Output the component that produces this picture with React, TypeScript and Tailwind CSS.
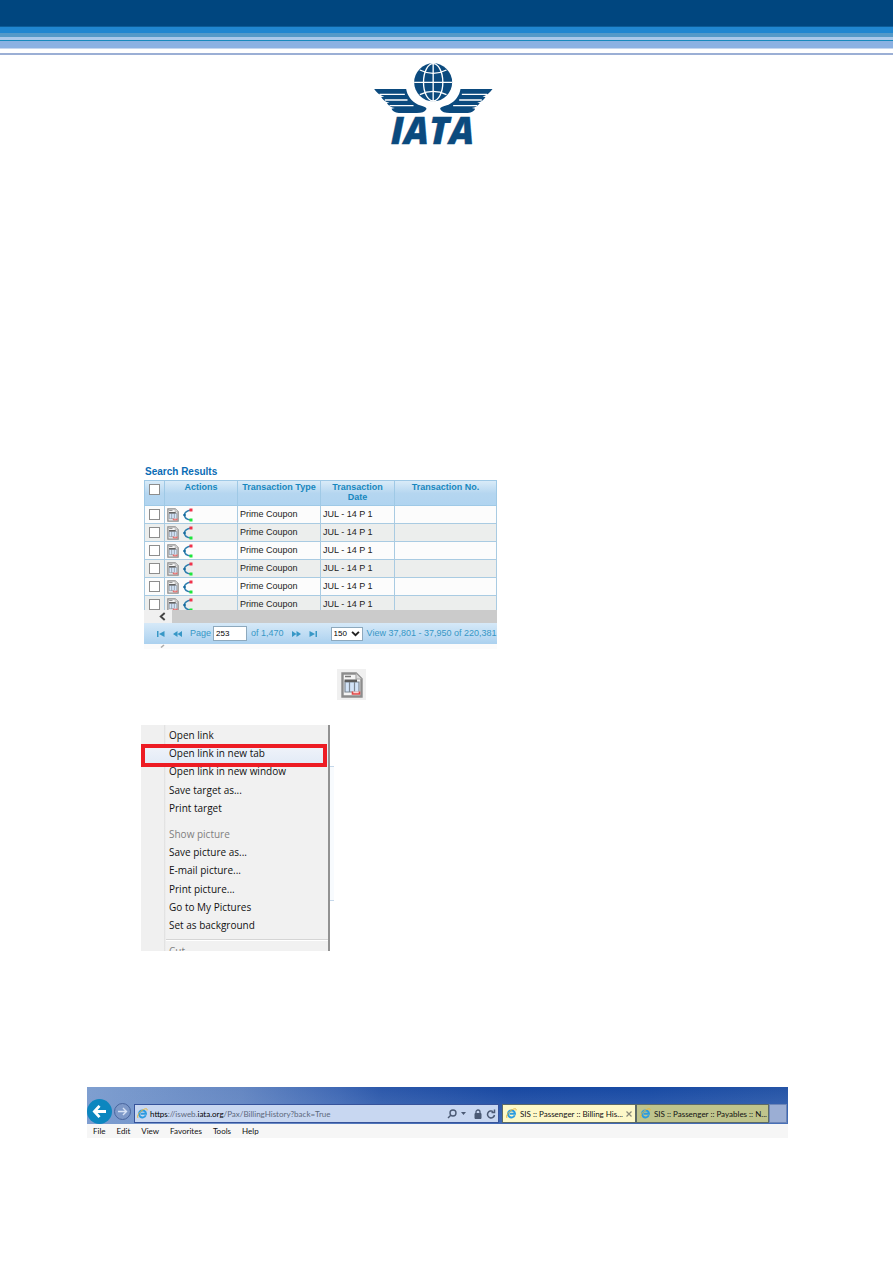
import { useState } from "react";

function IataLogo() {
  return (
    <svg viewBox="30 18 356 252" className="h-[84px] w-[119px] overflow-visible" role="img" aria-label="IATA">
      <g fill="#0b4a7e">
        <path d="M30 99H126C129 118 141 136 162 146C176 151 188 153 187 159C182 168 172 171 158 171H104C92 170 84 164 82 158L92 156C82 156 74 150 68 142L76 140C64 139 56 131 51 123L60 122C46 117 36 109 30 99Z" />
        <path d="M385 99H289C286 118 274 136 253 146C239 151 227 153 228 159C233 168 243 171 257 171H311C323 170 331 164 333 158L323 156C333 156 341 150 347 142L339 140C351 139 359 131 364 123L355 122C369 117 379 109 385 99Z" />
        <circle cx="207" cy="79" r="57" />
      </g>
      <g fill="none" stroke="#fff" strokeWidth="4">
        <path d="M46 115H122M62 132H130M76 149H148M369 115H293M353 132H285M339 149H267" />
        <path d="M207 22V136M150 79H264" />
        <ellipse cx="207" cy="79" rx="29" ry="56" />
        <path d="M167 42Q207 62 247 42M167 116Q207 96 247 116" />
      </g>
      <text
        x="80"
        y="265"
        fontSize="111"
        fill="#0b4a7e"
        stroke="#0b4a7e"
        strokeWidth="1"
        className="font-['Open_Sans',sans-serif] font-extrabold italic"
      >
        IATA
      </text>
    </svg>
  );
}

function InvoiceIcon({ className }: { className: string }) {
  return (
    <svg viewBox="0 0 22 26" className={className} aria-hidden="true">
      <path d="M1.500 1.500H15L20.500 7V24.500H1.500Z" fill="#f4f4f4" stroke="#8c8c8c" strokeWidth="2.400" />
      <path d="M15 1.500V7H20.500" fill="#ddd" stroke="#aaa" strokeWidth="1.200" />
      <path d="M4 4.500H10" stroke="#777" strokeWidth="1.500" />
      <path d="M4 10H18V20H4Z" fill="#d3e4f8" stroke="#7d8792" strokeWidth="1.200" />
      <path d="M8.500 10V20M13.500 10V20" stroke="#7d8792" strokeWidth="1.200" />
      <path d="M3.500 7.500H16V10H3.500Z" fill="#5c5c5c" />
      <path d="M11.500 19.500V22H18.500V19.500" fill="#fbd5d5" stroke="#e04848" strokeWidth="1.600" />
    </svg>
  );
}

function FlowIcon() {
  return (
    <svg viewBox="0 0 10 14" className="h-[14px] w-[10px]" aria-hidden="true">
      <path d="M7.5 2C3 3 1.5 5 1.5 7C1.5 9.500 3.500 11.500 7.500 12" fill="none" stroke="#2f7fae" strokeWidth="1.5" />
      <circle cx="1.500" cy="7" r="1.300" fill="#146a9e" />
      <rect x="6.500" y="0.500" width="3" height="3" fill="#f0324a" />
      <rect x="6.500" y="10.500" width="3" height="3" fill="#1ee63c" />
    </svg>
  );
}

function IeIcon() {
  return (
    <svg viewBox="0 0 22 22" className="size-[11px] shrink-0" aria-hidden="true">
      <path d="M17.500 14.500A7 7 0 1 1 18 11.500H7" fill="none" stroke="#2c9be0" strokeWidth="4" />
      <path d="M2 20C-1 16 5 7 13 3C18 0.500 21.500 1 20 5" fill="none" stroke="#e8b83c" strokeWidth="2" />
    </svg>
  );
}

const checkbox = "block size-[11px] appearance-none border border-[#8d8d8d] bg-white checked:bg-[#1b87c0]";

function SearchResults() {
  const head = "border border-[#9fc9e6] px-1 pt-px align-top leading-[10px] font-bold text-[#1787be]";
  const cell = "h-[18px] border border-[#a9cbe2] px-[2px] py-0";
  return (
    <section className="ml-[144px] w-[353px] font-['Liberation_Sans',Arial,sans-serif] text-[9px]">
      <h2 className="h-[14px] pl-px text-[10px] leading-[12px] font-bold text-[#0a6cb5]">Search Results</h2>
      <div className="h-[130px] overflow-hidden">
        <table className="w-full table-fixed border-collapse">
          <colgroup>
            <col className="w-[20px]" />
            <col className="w-[73px]" />
            <col className="w-[83px]" />
            <col className="w-[74px]" />
            <col />
          </colgroup>
          <thead>
            <tr className="h-[25px] bg-linear-to-b from-[#d9ebf8] via-[#b5d6f0] to-[#b0d4f0]">
              <th className="border border-[#9fc9e6] p-0 pt-[3px] pl-1 align-top">
                <input type="checkbox" aria-label="Select all rows" className={checkbox} />
              </th>
              <th className={head}>Actions</th>
              <th className={head}>Transaction Type</th>
              <th className={head}>Transaction Date</th>
              <th className={head}>Transaction No.</th>
            </tr>
          </thead>
          <tbody>
            {[1, 2, 3, 4, 5, 6].map((row) => (
              <tr key={row} className="bg-[#fcfcfc] text-[#222] even:bg-[#eceeed]">
                <td className="border border-[#a9cbe2] p-0 pl-1">
                  <input type="checkbox" aria-label={`Select row ${row}`} className={checkbox} />
                </td>
                <td className={cell}>
                  <div className="flex items-center gap-1">
                    <InvoiceIcon className="h-[14px] w-3" />
                    <FlowIcon />
                  </div>
                </td>
                <td className={cell}>Prime Coupon</td>
                <td className={`${cell} whitespace-nowrap`}>JUL - 14 P 1</td>
                <td className={cell}></td>
              </tr>
            ))}
          </tbody>
        </table>
      </div>
      <div className="flex h-[13px] bg-[#cbcbcb]">
        <button aria-label="Scroll left" className="flex w-[28px] items-center justify-center bg-[#f0f0f0] pl-2">
          <svg viewBox="0 0 8 10" className="h-[9px] w-[7px]">
            <path d="M6.500 1L2 5L6.500 9" fill="none" stroke="#444" strokeWidth="2.200" />
          </svg>
        </button>
      </div>
      <nav className="flex h-[21px] items-center bg-linear-to-b from-[#d6e9f8] to-[#abd1ef] pl-[13px] whitespace-nowrap text-[#3797c6]">
        <button aria-label="First page" className="mr-2">
          <svg viewBox="0 0 8 6" className="h-[6px] w-2" fill="currentColor">
            <path d="M0 0H1.500V6H0ZM7.500 0V6L2 3Z" />
          </svg>
        </button>
        <button aria-label="Previous page" className="mr-2">
          <svg viewBox="0 0 9 6" className="h-[6px] w-[9px]" fill="currentColor">
            <path d="M4.500 0V6L0 3ZM9 0V6L4.500 3Z" />
          </svg>
        </button>
        <label htmlFor="page" className="mr-[2px]">Page</label>
        <input id="page" defaultValue="253" className="mr-1 h-[15px] w-[34px] border border-[#8ea9bd] bg-white px-[2px] text-[8px] text-black" />
        <span className="mr-2">of 1,470</span>
        <button aria-label="Next page" className="mr-2">
          <svg viewBox="0 0 9 6" className="h-[6px] w-[9px]" fill="currentColor">
            <path d="M0 0V6L4.500 3ZM4.500 0V6L9 3Z" />
          </svg>
        </button>
        <button aria-label="Last page" className="mr-[14px]">
          <svg viewBox="0 0 8 6" className="h-[6px] w-2" fill="currentColor">
            <path d="M0.500 0V6L6 3ZM6.500 0H8V6H6.500Z" />
          </svg>
        </button>
        <span className="relative mr-1">
          <select aria-label="Rows per page" className="block h-[14px] w-[32px] appearance-none border border-[#8ea9bd] bg-white pl-[2px] text-[8px] text-black">
            <option>150</option>
          </select>
          <svg viewBox="0 0 10 7" className="pointer-events-none absolute top-1 right-[3px] h-[6px] w-[9px]" aria-hidden="true">
            <path d="M1 1L5 5L9 1" fill="none" stroke="#222" strokeWidth="2.200" />
          </svg>
        </span>
        <span>View 37,801 - 37,950 of 220,381</span>
      </nav>
      <div className="h-[5px] bg-[#fbfbfb] pl-[16px]">
        <svg viewBox="0 0 6 4" className="h-[4px] w-[6px]" aria-hidden="true">
          <path d="M1 3.500L4 1" stroke="#aaa" strokeWidth="1.500" />
        </svg>
      </div>
    </section>
  );
}

function ContextMenu() {
  const item = "flex items-center pl-[28px] text-left";
  return (
    <div className="ml-[141px] flex h-[226px] w-[193px] font-['Open_Sans','Noto_Sans',sans-serif] text-[10px] text-[#111]">
      <div role="menu" className="relative w-[187px] overflow-hidden bg-linear-to-r from-[#f0f0f0] from-[23px] via-[#dedede] via-[23px] to-[#f1f1f1] to-[25px] pt-px">
        <div className="grid h-[92px] grid-rows-5">
          <button role="menuitem" className={item}>Open link</button>
          <button role="menuitem" className={`${item} bg-linear-to-b from-[#f1f4fa] to-[#e3ebf7]`}>Open link in new tab</button>
          <button role="menuitem" className={item}>Open link in new window</button>
          <button role="menuitem" className={item}>Save target as...</button>
          <button role="menuitem" className={item}>Print target</button>
        </div>
        <div className="mt-[7px] grid h-[110px] grid-rows-6">
          <button role="menuitem" disabled className={`${item} text-[#808080]`}>Show picture</button>
          <button role="menuitem" className={item}>Save picture as...</button>
          <button role="menuitem" className={item}>E-mail picture...</button>
          <button role="menuitem" className={item}>Print picture...</button>
          <button role="menuitem" className={item}>Go to My Pictures</button>
          <button role="menuitem" className={item}>Set as background</button>
        </div>
        <div className="mt-1 ml-[25px] h-[2px] border-t border-[#d5d5d5] bg-white" />
        <button role="menuitem" disabled className={`${item} h-[20px] text-[#808080]`}>Cut</button>
        <div className="pointer-events-none absolute top-[19px] right-px left-0 h-[23px] border-4 border-[#ed1c24]" />
      </div>
      <div className="w-[2px] bg-[#929292]" />
      <div className="mt-[41px] h-[135px] flex-1 border-y border-[#c4d7ea] bg-[#f8fbfe]" />
    </div>
  );
}

function AddressBar() {
  const [editing, setEditing] = useState(false);
  const [url, setUrl] = useState("https://isweb.iata.org/Pax/BillingHistory?back=True");
  return (
    <div className="flex h-[19px] flex-1 items-center gap-[2px] border border-[#36539b] bg-[#c8d7f1] px-[2px]">
      <IeIcon />
      <div className="relative flex h-full flex-1 items-center text-[#5c687c]">
        <input
          aria-label="Address"
          className="absolute inset-0 bg-transparent outline-none"
          value={editing ? url : ""}
          onChange={(e) => setUrl(e.target.value)}
          onFocus={() => setEditing(true)}
          onBlur={() => setEditing(false)}
        />
        {!editing && (
          <span className="pointer-events-none whitespace-nowrap">
            <span className="text-black">https</span>://isweb.<span className="text-black">iata.org</span>/Pax/BillingHistory?back=True
          </span>
        )}
      </div>
      <div className="flex items-center gap-1 text-[#4b5a75]">
        <button aria-label="Search">
          <svg viewBox="0 0 10 10" className="size-[10px]" fill="none" stroke="currentColor" strokeWidth="1.400">
            <circle cx="6" cy="4" r="3" />
            <path d="M4 6L1 9" />
          </svg>
        </button>
        <button aria-label="Search options" className="mr-1">
          <svg viewBox="0 0 5 3" className="h-[3px] w-[5px]" fill="currentColor"><path d="M0 0H5L2.500 3Z" /></svg>
        </button>
        <svg viewBox="0 0 8 10" className="h-[10px] w-2" aria-hidden="true">
          <path d="M1 4.500H7V9.500H1Z" fill="currentColor" stroke="currentColor" />
          <path d="M2 5V3A2 2 0 0 1 6 3V5" fill="none" stroke="currentColor" strokeWidth="1.300" />
        </svg>
        <button aria-label="Refresh">
          <svg viewBox="0 0 10 10" className="size-[10px]" fill="none" stroke="currentColor" strokeWidth="1.500">
            <path d="M8.500 6A3.500 3.500 0 1 1 7 2.500M5.500 3.500H8.500V0.500" />
          </svg>
        </button>
      </div>
    </div>
  );
}

function BrowserBar() {
  const tab = "flex h-[19px] items-center gap-[3px] overflow-hidden border border-[#5c6a66] pl-[3px] whitespace-nowrap text-[#111]";
  return (
    <section className="mr-[105px] ml-[87px] font-['Lato','Noto_Sans',sans-serif] text-[8px]">
      <div className="h-[37px] bg-[linear-gradient(90deg,#7f9fd0_0%,#6587c2_22%,#3f68b4_36%,#2c58aa_42%,#1848a2_60%,#184aa4_80%,#2554a6_100%)]">
        <div className="flex h-full items-end bg-linear-to-b from-transparent to-[#7c9bd0]/40">
          <button aria-label="Back" className="flex size-[25px] shrink-0 items-center justify-center rounded-full bg-[#0c86bf]">
            <svg viewBox="0 0 16 14" className="h-[13px] w-[15px]" fill="none" stroke="#fff" strokeWidth="3">
              <path d="M8 1L2.500 7L8 13M2.500 7H15" />
            </svg>
          </button>
          <button aria-label="Forward" className="mr-[3px] mb-1 ml-[2px] flex size-[17px] shrink-0 items-center justify-center rounded-full border border-[#48659e] bg-[#7d98c8]">
            <svg viewBox="0 0 12 10" className="h-[9px] w-[11px]" fill="none" stroke="#d8e3f6" strokeWidth="1.500">
              <path d="M6.500 1L10.500 5L6.500 9M10.500 5H1" />
            </svg>
          </button>
          <div className="flex min-w-0 flex-1 items-center pb-px">
            <AddressBar />
            <div role="tablist" className="ml-[3px] flex">
              <div className={`${tab} w-[134px] bg-[#fdf8c8]`}>
                <IeIcon />
                <button role="tab" aria-selected="true" className="flex-1 text-left">SIS :: Passenger :: Billing His...</button>
                <button aria-label="Close tab" className="mr-1">
                  <svg viewBox="0 0 6 6" className="size-[6px]" stroke="#8a8a78" strokeWidth="1.200"><path d="M0.500 0.500L5.500 5.500M5.500 0.500L0.500 5.500" /></svg>
                </button>
              </div>
              <button role="tab" aria-selected="false" className={`${tab} w-[133px] bg-[#bfc48c]`}>
                <IeIcon />
                SIS :: Passenger :: Payables :: N...
              </button>
            </div>
            <button aria-label="New tab" className="mr-px h-[19px] w-[18px] border border-[#6d86b8] bg-[#9baed4]" />
          </div>
        </div>
      </div>
      <nav className="flex h-[14px] items-center gap-[11px] bg-[#f6f6f6] pl-[6px] text-[#111]">
        <button>File</button>
        <button>Edit</button>
        <button>View</button>
        <button>Favorites</button>
        <button>Tools</button>
        <button>Help</button>
      </nav>
    </section>
  );
}

export default function App() {
  return (
    <main className="bg-white pb-[125px]">
      <header>
        <div className="h-[26px] bg-[#00467f]" />
        <div className="h-px bg-[#0c5c98]" />
        <div className="h-[6px] bg-[#2086d0]" />
        <div className="h-[4px] bg-[#5499c8]" />
        <div className="h-[3px] bg-[#a9c8ea]" />
        <div className="h-px bg-[#1889bd]" />
        <div className="h-[7px] bg-[#8bb1e2]" />
        <div className="h-px bg-[#c6d6ef]" />
        <div className="h-[4px] bg-white" />
        <div className="h-[2px] bg-[#9bafd5]" />
        <div className="mt-[7px] flex justify-center pr-[27px]">
          <IataLogo />
        </div>
      </header>
      <div className="mt-[320px]">
        <SearchResults />
      </div>
      <div className="mt-[20px] ml-[337px] flex h-[31px] w-[29px] items-center justify-center bg-[#f0f0f0]">
        <InvoiceIcon className="h-[26px] w-[22px]" />
      </div>
      <div className="mt-[25px]">
        <ContextMenu />
      </div>
      <div className="mt-[136px]">
        <BrowserBar />
      </div>
    </main>
  );
}
